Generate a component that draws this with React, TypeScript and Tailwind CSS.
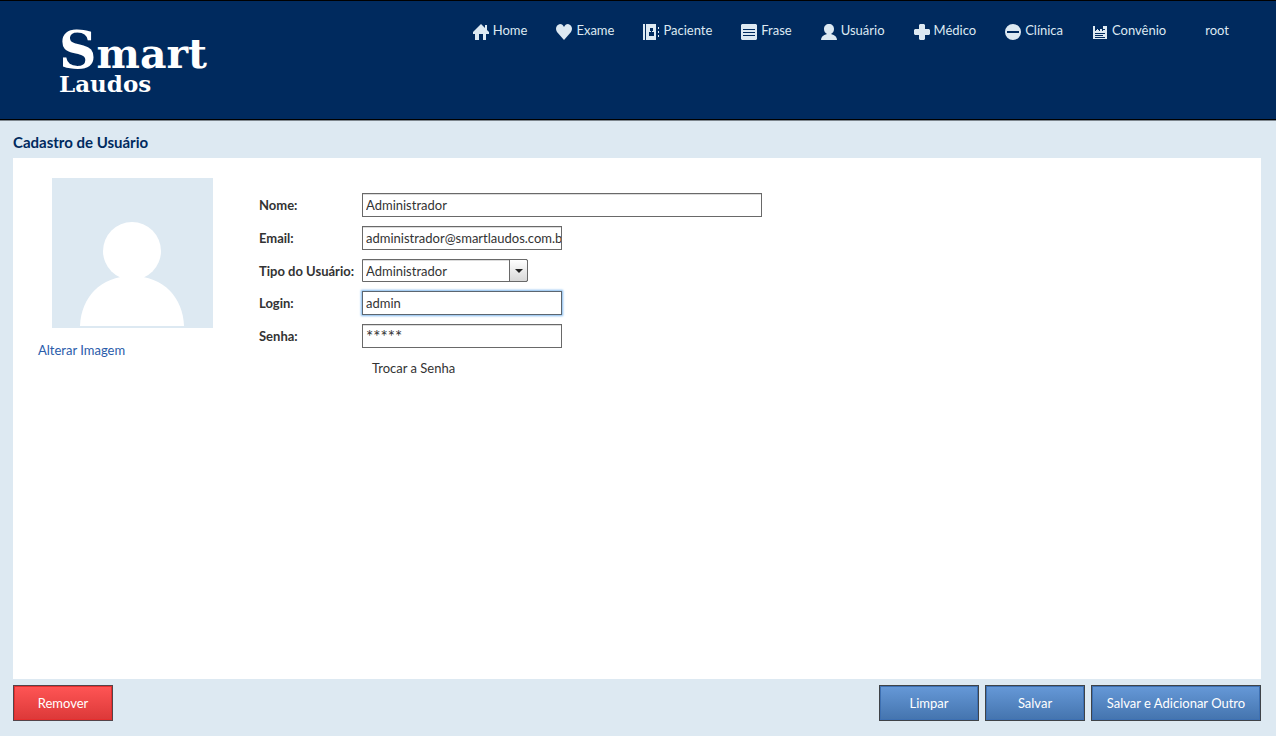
import type { ReactNode } from 'react';

const icons: Record<string, ReactNode> = {
  home: <path d="M8 0 0 8v2h2v6h4v-6h4v6h3v-6h3V8l-2-2V1h-2v3z" />,
  heart: <path d="M8 16 1 8C-1 5 0 1 4 0c2 0 3 1 4 3 1-2 2-3 4-3 4 1 5 5 3 8z" />,
  contacts: (
    <path
      fillRule="evenodd"
      d="M0 0h2v16H0zM3 0h10v16H3zM7 4v3h1v1H6v4h5V8H9V7h1V4zM15 3h1v2h-1zM15 7h1v2h-1zM15 11h1v2h-1z"
    />
  ),
  list: (
    <path
      fillRule="evenodd"
      d="M1 0h14l1 1v14l-1 1H1l-1-1V1zM2 5v1h12V5zM2 8v1h12V8zM2 11v1h12v-1z"
    />
  ),
  user: <path d="M8 0c3 0 5 2 5 5 0 2-1 4-3 5 4 1 6 3 6 6H0c0-3 2-5 6-6-2-1-3-3-3-5 0-3 2-5 5-5z" />,
  plus: <path d="M6 0h4l1 1v4h4l1 1v4l-1 1h-4v4l-1 1H6l-1-1v-4H1l-1-1V6l1-1h4V1z" />,
  minus: <path fillRule="evenodd" d="M8 0a8 8 0 1 1 0 16A8 8 0 0 1 8 0zM2 7v2h12V7z" />,
  report: (
    <path
      fillRule="evenodd"
      d="M1 2h2v5h1V6h1V5h1v1h1v1h1V5h2v2h1V2h4v13H1zM11 5v1h2V5zM3 9v1h10V9zM3 11v1h8v-1zM3 13v1h10v-1z"
    />
  ),
};

const menu = [
  { icon: 'home', label: 'Home' },
  { icon: 'heart', label: 'Exame' },
  { icon: 'contacts', label: 'Paciente' },
  { icon: 'list', label: 'Frase' },
  { icon: 'user', label: 'Usuário' },
  { icon: 'plus', label: 'Médico' },
  { icon: 'minus', label: 'Clínica' },
  { icon: 'report', label: 'Convênio' },
];

function Header() {
  return (
    <header className="flex items-start justify-between border-y border-black bg-[#002a5e] pr-[47px] pl-[59px]">
      <a href="#" className="h-[118px] pt-[26px] font-['DejaVu_Serif',serif] font-bold text-white">
        <span className="flex items-baseline leading-[46px]">
          <span className="text-[52px]">S</span>
          <span className="text-[41px]">mart</span>
        </span>
        <span className="block text-[23px] leading-[14px]">Laudos</span>
      </a>
      <nav className="flex items-start gap-[29px] pt-[19px] text-[#dde9f2]">
        {menu.map((item) => (
          <a key={item.label} href="#" className="flex items-start gap-1 leading-5">
            <svg viewBox="0 0 16 16" className="mt-1 size-4 fill-[#dde9f2]">
              {icons[item.icon]}
            </svg>
            {item.label}
          </a>
        ))}
        <a href="#" className="ml-[10px] leading-5">
          root
        </a>
      </nav>
    </header>
  );
}

function Avatar() {
  return (
    <svg viewBox="0 0 161 150" className="ml-[39px] h-[150px] w-[161px]" role="img" aria-label="Imagem do usuário">
      <rect width="161" height="150" fill="#dde9f2" />
      <circle cx="80" cy="73" r="29" fill="#fff" />
      <path d="M28 148c1-28 20-50 52-50s51 22 52 50z" fill="#fff" />
    </svg>
  );
}

const label = 'w-[103px] shrink-0 pt-0.5 font-bold';
const field = 'border border-[#696969] bg-white pl-[3px] shadow-[inset_0_1px_0_#dcdcdc] outline-none';
const blueButton =
  'h-9 border border-[#3f4348] bg-linear-to-b from-[#6699d8] to-[#4474ae] pt-0.5 text-white shadow-[inset_0_0_0_1px_#3d70b3]';

function UserForm() {
  return (
    <div className="flex flex-col gap-[9px] pt-[35px]">
      <div className="flex items-center">
        <label htmlFor="nome" className={label}>Nome:</label>
        <input id="nome" defaultValue="Administrador" className={`${field} h-6 w-[400px]`} />
      </div>
      <div className="flex items-center">
        <label htmlFor="email" className={label}>Email:</label>
        <input id="email" defaultValue="administrador@smartlaudos.com.br" className={`${field} h-6 w-[200px]`} />
      </div>
      <div className="flex items-center">
        <label htmlFor="tipo" className={`${label} whitespace-nowrap`}>Tipo do Usuário:</label>
        <div className="relative">
          <select id="tipo" className={`${field} block h-[23px] w-[166px] appearance-none rounded-r-[2px] pt-0.5`}>
            <option>Administrador</option>
          </select>
          <span className="pointer-events-none absolute inset-y-0 right-0 flex w-[19px] items-center justify-center rounded-r-[2px] border border-[#696969] bg-linear-to-b from-white to-[#d8d8d8]">
            <svg viewBox="0 0 8 4" className="h-1 w-2 fill-[#222]">
              <path d="M0 0h8L4 4z" />
            </svg>
          </span>
        </div>
      </div>
      <div className="flex items-center">
        <label htmlFor="login" className={label}>Login:</label>
        <input
          id="login"
          defaultValue="admin"
          className="h-6 w-[200px] border border-[#5c6670] bg-white pl-[3px] shadow-[0_0_2px_1px_#7fb8ee] outline-none"
        />
      </div>
      <div className="flex items-center">
        <label htmlFor="senha" className={label}>Senha:</label>
        <input id="senha" defaultValue="*****" className={`${field} h-6 w-[200px] pt-0.5 text-[17px]`} />
      </div>
      <button type="button" className="ml-[113px] self-start leading-[22px]">
        Trocar a Senha
      </button>
    </div>
  );
}

export default function App() {
  return (
    <div className="flex min-h-screen flex-col bg-[#dde9f2] font-['Lato',sans-serif] text-[13px] text-[#333]">
      <Header />
      <main className="flex flex-1 flex-col border-t border-[#7d868e] pr-[15px] pb-[15px] pl-[13px]">
        <h1 className="pt-[11px] pb-[6px] text-[15px] leading-5 font-bold text-[#002a5e]">Cadastro de Usuário</h1>
        <section className="flex flex-1 items-start bg-white">
          <div className="w-[246px] shrink-0 pt-5">
            <Avatar />
            <a href="#" className="mt-3 ml-[25px] block leading-5 text-[#2a5caa]">
              Alterar Imagem
            </a>
          </div>
          <UserForm />
        </section>
        <footer className="flex gap-[6px] pt-[6px]">
          <button
            type="button"
            className="mr-auto h-9 w-[100px] border border-[#54444a] bg-linear-to-b from-[#ff5555] to-[#dc3838] pt-0.5 text-white shadow-[inset_0_0_0_1px_#e52e2e]"
          >
            Remover
          </button>
          <button type="button" className={`${blueButton} w-[100px]`}>Limpar</button>
          <button type="button" className={`${blueButton} w-[100px]`}>Salvar</button>
          <button type="button" className={`${blueButton} w-[170px]`}>Salvar e Adicionar Outro</button>
        </footer>
      </main>
    </div>
  );
}
